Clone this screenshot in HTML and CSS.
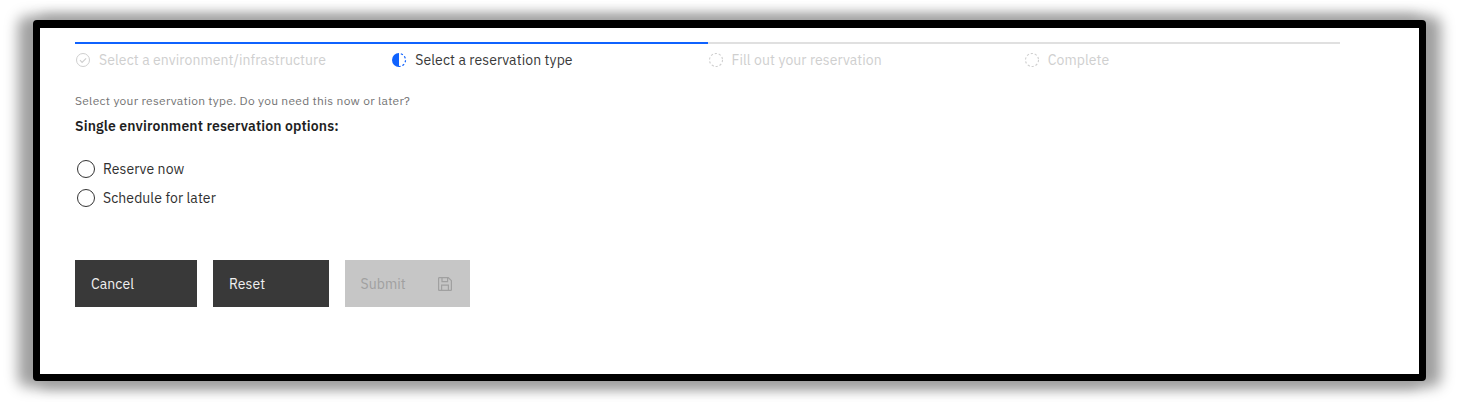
FILE: index.html
```html
<!DOCTYPE html>
<html lang="en">
<head>
<meta charset="utf-8">
<title>Select a reservation type</title>
<link rel="stylesheet" href="styles.css">
</head>
<body>
<main class="frame">
  <ol class="progress">
    <li class="step done">
      <svg class="step-icon" viewBox="0 0 16 16"><circle cx="8" cy="8" r="6.5" fill="none" stroke="currentColor"/><path d="M5 8.2l2.1 2.1 4-4" fill="none" stroke="currentColor" stroke-width="1.2"/></svg>
      <span class="label">Select a environment/infrastructure</span>
    </li>
    <li class="step current">
      <svg class="step-icon" viewBox="0 0 16 16"><path d="M8 1a7 7 0 0 0 0 14z" fill="currentColor"/><path d="M8 1.5a6.5 6.5 0 0 1 0 13" fill="none" stroke="currentColor" stroke-width="1.2" stroke-dasharray="2.2 1.9" stroke-dashoffset="-1.9"/></svg>
      <span class="label">Select a reservation type</span>
    </li>
    <li class="step">
      <svg class="step-icon" viewBox="0 0 16 16"><circle cx="8" cy="8" r="6.5" fill="none" stroke="currentColor" stroke-width="1.1" stroke-dasharray="2.2 1.884"/></svg>
      <span class="label">Fill out your reservation</span>
    </li>
    <li class="step">
      <svg class="step-icon" viewBox="0 0 16 16"><circle cx="8" cy="8" r="6.5" fill="none" stroke="currentColor" stroke-width="1.1" stroke-dasharray="2.2 1.884"/></svg>
      <span class="label">Complete</span>
    </li>
  </ol>
  <form class="form">
    <p class="hint">Select your reservation type. Do you need this now or later?</p>
    <h1 class="title">Single environment reservation options:</h1>
    <div class="options">
      <label class="option"><input class="radio" type="radio" name="when"><span>Reserve now</span></label>
      <label class="option"><input class="radio" type="radio" name="when"><span>Schedule for later</span></label>
    </div>
    <div class="actions">
      <button class="button cancel" type="button">Cancel</button>
      <button class="button reset" type="button">Reset</button>
      <button class="button submit" type="button" disabled><span>Submit</span>
        <svg class="save" viewBox="0 0 16 16"><path d="M2 1.6h9.3l3.1 3.1v9.1a.6.6 0 0 1-.6.6H2.2a.6.6 0 0 1-.6-.6V2.2a.6.6 0 0 1 .6-.6zM5 1.6v4.1h5.6V1.6M4.6 14.2V9.1h6.8v5.1" fill="none" stroke="currentColor" stroke-width="1.2"/></svg>
      </button>
    </div>
  </form>
</main>
</body>
</html>
```
FILE: styles.css
```css
* { box-sizing: border-box; }
body {
  margin: 0;
  height: 406px;
  padding: 20px 34px 24px 33px;
  overflow: hidden;
  background: #fff;
  color: #303030;
  font: 14px/18px "IBM Plex Sans", Roboto, sans-serif;
  letter-spacing: .08px;
}
.frame {
  height: 361px;
  padding: 14px 79px 0 35px;
  border: solid #000;
  border-width: 8px 7px 7px;
  border-radius: 4px;
  background: #fff;
  box-shadow: -10px 1px 14px 5px #a0a0a0, 10px 1px 14px 5px #a0a0a0;
}
.progress { display: grid; grid-template-columns: repeat(4, 1fr); margin: 0; padding: 0; list-style: none; }
.step { display: flex; height: 28px; padding-top: 7px; border-top: 2px solid #e0e0e0; color: #cfcfcf; }
.done, .current { border-color: #0f62fe; }
.step-icon { width: 16px; height: 16px; margin: 1px 8px 0 0; flex: none; }
.current .step-icon { color: #0f62fe; }
.current .label { color: #393939; }
.label { white-space: nowrap; }
.hint { margin: 23px 0 0; font-size: 12px; line-height: 16px; letter-spacing: .27px; color: #747474; }
.title { margin: 8px 0 0; font-size: 14px; line-height: 18px; font-weight: 600; letter-spacing: .12px; color: #1f1f1f; }
.options { display: grid; gap: 9px; margin: 24px 0 0 2px; }
.option { display: flex; align-items: center; gap: 8px; height: 20px; }
.radio { appearance: none; width: 18px; height: 18px; margin: 0; border: 1.3px solid #333; border-radius: 50%; }
.actions { display: flex; gap: 16px; margin-top: 52px; }
.button { height: 47px; padding: 0 16px; border: 0; background: #393939; color: #f0f0f0; font: inherit; letter-spacing: .08px; text-align: left; }
.cancel { width: 122px; }
.reset { width: 115.5px; }
.submit { display: flex; align-items: center; justify-content: space-between; width: 125px; padding-right: 17px; background: #c6c6c6; color: #a0a0a0; }
.save { width: 16px; height: 16px; }
```
